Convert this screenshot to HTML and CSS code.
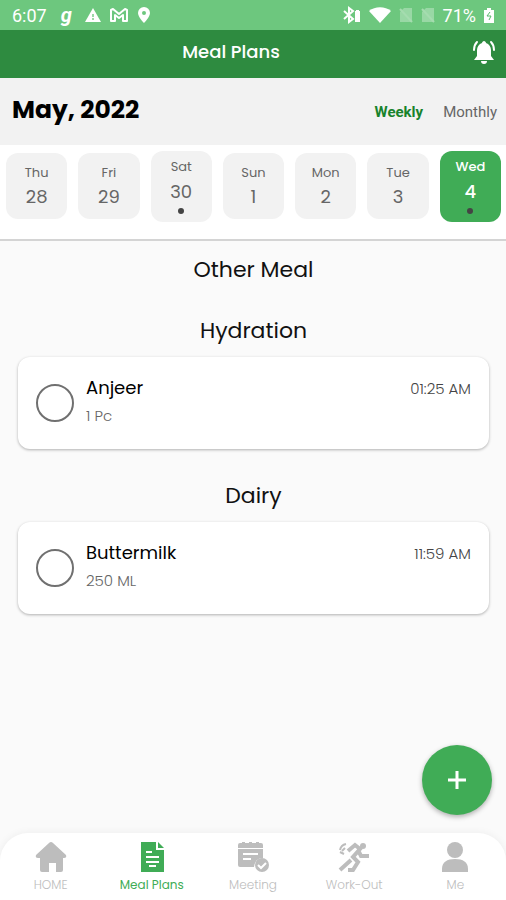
FILE: index.html
```html
<!DOCTYPE html>
<html lang="en">
<head>
    <meta charset="UTF-8">
    <meta name="viewport" content="width=device-width, initial-scale=1.0">
    <title>Meal Plans</title>
    <link rel="stylesheet" href="styles.css">
</head>
<body>
    <div class="status-bar">
        <div class="status-left">
            <span class="clock">6:07</span>
            <span class="g-logo">g</span>
            <svg width="18" height="18" viewBox="0 0 18 18"><path d="M9 2L17 16H1z" fill="#fff"/><path d="M9 8v3M9 12v2" stroke="#9bd8a6" stroke-width="2"/></svg>
            <svg width="18" height="18" viewBox="0 0 18 18"><path d="M1 15V4l2-1 6 5 6-5 2 1v11h-4V9l-4 3-4-3v6z" fill="none" stroke="#fff" stroke-width="2" stroke-linejoin="round"/></svg>
            <svg width="16" height="18" viewBox="0 0 16 18"><path d="M8 1a6 6 0 0 0-6 6c0 4 6 10 6 10s6-6 6-10a6 6 0 0 0-6-6zm0 4a2 2 0 1 1 0 4 2 2 0 0 1 0-4z" fill="#fff"/></svg>
        </div>
        <div class="status-right">
            <svg width="18" height="18" viewBox="0 0 18 18"><path d="M1 5l9 8-4 3V2l4 3-9 8" fill="none" stroke="#fff" stroke-width="2"/><path d="M12 5h1V4h3v1h1v11h-5z" fill="#fff"/></svg>
            <svg class="wifi" width="22" height="18" viewBox="0 0 22 18"><path d="M0 5C6 0 16 0 22 5L11 17z" fill="#fff"/></svg>
            <svg width="14" height="18" viewBox="0 0 14 18"><path d="M5 2h8v14H1V6z" fill="#fff" opacity=".3"/><path d="M1 3l12 13" stroke="#a5dcaf" stroke-width="2"/></svg>
            <svg width="14" height="18" viewBox="0 0 14 18"><path d="M5 2h8v14H1V6z" fill="#fff" opacity=".3"/><path d="M1 3l12 13" stroke="#a5dcaf" stroke-width="2"/></svg>
            <span>71%</span>
            <svg width="10" height="18" viewBox="0 0 10 18"><path d="M0 4h3V2h4v2h3v13H0z" fill="#fff"/><path d="M6 6l-3 4h4l-2 4" fill="none" stroke="#59b76b"/></svg>
        </div>
    </div>

    <header class="app-bar">
        <h1>Meal Plans</h1>
        <button class="bell" aria-label="Notifications">
            <svg width="24" height="26" viewBox="0 0 24 26"><path d="M12 2c1 0 2 1 2 2 3 1 5 4 5 7v6l3 4H2l3-4v-6c0-3 2-6 5-7 0-1 1-2 2-2zM9 22h6c0 2-1 3-3 3s-3-1-3-3z" fill="#fff"/><path d="M5 3C3 5 2 7 2 11M19 3c2 2 3 4 3 8" fill="none" stroke="#fff" stroke-width="2" stroke-linecap="round"/></svg>
        </button>
    </header>

    <div class="month-bar">
        <h2>May, 2022</h2>
        <div class="view-switch">
            <button class="view active">Weekly</button>
            <button class="view">Monthly</button>
        </div>
    </div>

    <div class="days">
        <button class="day"><span>Thu</span><span class="date">28</span></button>
        <button class="day"><span>Fri</span><span class="date">29</span></button>
        <button class="day marked"><span>Sat</span><span class="date">30</span></button>
        <button class="day"><span>Sun</span><span class="date">1</span></button>
        <button class="day"><span>Mon</span><span class="date">2</span></button>
        <button class="day"><span>Tue</span><span class="date">3</span></button>
        <button class="day marked selected"><span>Wed</span><span class="date">4</span></button>
    </div>

    <main>
        <h3>Other Meal</h3>
        <h3>Hydration</h3>
        <div class="meal">
            <input type="checkbox" id="anjeer">
            <label for="anjeer">Anjeer<small>1 Pc</small></label>
            <time>01:25 AM</time>
        </div>
        <h3>Dairy</h3>
        <div class="meal">
            <input type="checkbox" id="buttermilk">
            <label for="buttermilk">Buttermilk<small>250 ML</small></label>
            <time>11:59 AM</time>
        </div>
    </main>

    <div class="bottom">
        <button class="add" aria-label="Add meal">
            <svg width="18" height="18" viewBox="0 0 18 18"><path d="M9 0v18M0 9h18" stroke="#fff" stroke-width="3"/></svg>
        </button>
        <nav>
            <a href="#">
                <svg width="32" height="32" viewBox="0 0 32 32"><path d="M14 2q2-2 4 0l13 12q1 3-2 3h-1v12q0 2-2 2h-5v-9h-7v9H7q-2 0-2-2V17H3q-3 0-2-3z"/></svg>
                HOME
            </a>
            <a href="#" class="current">
                <svg width="32" height="32" viewBox="0 0 32 32"><path d="M5 1h15v8h8v22H5z"/><path d="M22 1l6 6h-6z"/><path d="M10 11h6M10 16h13M10 21h13M13 25h7" stroke="#fff" stroke-width="2"/></svg>
                Meal Plans
            </a>
            <a href="#">
                <svg width="32" height="32" viewBox="0 0 32 32"><path d="M3 2h2V1h3v1h4V1h3v1h4V1h3v1h2q2 0 2 2v3H1V4q0-2 2-2zM1 8h25v9q-8 0-9 9H3q-2 0-2-2z"/><path d="M6 13h15M6 18h8" stroke="#fff" stroke-width="2"/><circle cx="25" cy="24" r="7"/><path d="M21 24l3 3 5-5" fill="none" stroke="#fff" stroke-width="2"/></svg>
                Meeting
            </a>
            <a href="#">
                <svg class="runner" width="32" height="32" viewBox="0 0 32 32"><circle cx="25" cy="5" r="3" class="fill"/><path d="M10 10l7-6 5 4-7 8 5 5-5 8h-5M20 9l3 6h8M13 19L2 29"/><path d="M8 3Q3 4 2 9M7 7L4 10M6 13l-4-2" class="thin"/></svg>
                Work-Out
            </a>
            <a href="#">
                <svg width="32" height="32" viewBox="0 0 32 32"><circle cx="16" cy="9" r="8"/><path d="M3 31v-3c0-7 5-10 13-10s13 3 13 10v3z"/></svg>
                Me
            </a>
        </nav>
    </div>
</body>
</html>
```
FILE: styles.css
```css
* {
    box-sizing: border-box;
}
body {
    margin: 0;
    min-height: 100vh;
    display: flex;
    flex-direction: column;
    background-color: #fafafa;
    color: #111;
    font-family: Poppins, Inter, sans-serif;
}
button {
    border: none;
    padding: 0;
    background: none;
    font-family: inherit;
    cursor: pointer;
}
h1, h2, h3 {
    margin: 0;
}
svg {
    display: block;
}
.status-bar {
    height: 30px;
    padding: 0 12px;
    display: flex;
    justify-content: space-between;
    align-items: center;
    background-color: #6dc77e;
    color: #fff;
    font-family: Roboto, sans-serif;
    font-size: 18px;
}
.status-left,
.status-right {
    display: flex;
    align-items: center;
    gap: 8px;
}
.g-logo {
    margin: 0 4px 0 6px;
    font-size: 20px;
    font-style: italic;
    font-weight: bold;
    line-height: 20px;
}
.app-bar {
    height: 48px;
    padding: 0 10px 4px 0;
    display: flex;
    align-items: center;
    gap: 10px;
    background-color: #2e8b40;
    color: #fff;
}
.app-bar h1 {
    flex: 1;
    font-size: 18px;
    font-weight: 500;
    line-height: 24px;
    text-align: center;
}
.month-bar {
    height: 67px;
    padding: 0 9px 4px 12px;
    display: flex;
    justify-content: space-between;
    align-items: center;
    background-color: #f2f2f2;
}
.month-bar h2 {
    color: #000;
    font-size: 25px;
    font-weight: 700;
}
.view-switch {
    display: flex;
    gap: 20px;
}
.view {
    padding-top: 4px;
    color: #666;
    font-family: Roboto, sans-serif;
    font-size: 15px;
}
.view.active {
    color: #18832c;
    font-weight: 700;
}
.days {
    height: 96px;
    padding: 0 5px 12px 6px;
    display: grid;
    grid-template-columns: repeat(7, 1fr);
    gap: 11px;
    align-items: center;
    background-color: #fff;
    border-bottom: 2px solid #d4d4d4;
}
.day {
    height: 66px;
    display: flex;
    flex-direction: column;
    align-items: center;
    justify-content: center;
    gap: 3px;
    border-radius: 12px;
    background-color: #f2f2f2;
    color: #666;
    font-size: 13px;
    line-height: 18px;
}
.date {
    font-size: 18px;
    line-height: 24px;
}
.marked {
    height: 71px;
    gap: 4px;
}
.marked::after {
    content: "";
    width: 6px;
    height: 6px;
    border-radius: 50%;
    background-color: #444;
}
.selected {
    background-color: #40ac56;
    color: #fff;
    font-weight: 500;
}
main {
    flex: 1;
    padding: 0 17px 0 18px;
}
h3 {
    margin-top: 13px;
    font-size: 22px;
    font-weight: 400;
    line-height: 32px;
    text-align: center;
}
h3 + h3 {
    margin-top: 29px;
}
.meal {
    min-height: 92px;
    margin-top: 10px;
    padding: 18px;
    display: flex;
    align-items: flex-start;
    gap: 12px;
    border-radius: 12px;
    background-color: #fff;
    box-shadow: 0 1px 3px rgba(0, 0, 0, 0.3);
}
.meal + h3 {
    margin-top: 31px;
}
.meal input {
    appearance: none;
    width: 38px;
    height: 38px;
    margin: 9px 0 0;
    border: 2px solid #707070;
    border-radius: 50%;
}
.meal input:checked {
    background-color: #40ac56;
}
.meal label {
    flex: 1;
    color: #000;
    font-size: 18px;
    line-height: 26px;
}
.meal small {
    display: block;
    margin-top: 2px;
    color: #666;
    font-size: 15px;
    font-weight: 300;
}
.meal time {
    color: #444;
    font-size: 15px;
    font-weight: 300;
    line-height: 28px;
}
.bottom {
    position: sticky;
    bottom: 0;
}
.add {
    position: absolute;
    right: 14px;
    bottom: 85px;
    width: 70px;
    height: 70px;
    display: flex;
    align-items: center;
    justify-content: center;
    border-radius: 50%;
    background-color: #40ac56;
    box-shadow: 0 2px 5px rgba(0, 0, 0, 0.3);
}
nav {
    height: 67px;
    padding-top: 8px;
    display: grid;
    grid-template-columns: repeat(5, 1fr);
    border-radius: 28px 28px 0 0;
    background-color: #fff;
    box-shadow: 0 0 8px rgba(0, 0, 0, 0.06);
}
nav a {
    display: flex;
    flex-direction: column;
    align-items: center;
    gap: 4px;
    color: #bdbdbd;
    font-size: 12px;
    font-weight: 300;
    line-height: 16px;
    text-decoration: none;
}
nav svg {
    fill: currentColor;
}
nav .current {
    color: #40ac56;
    font-weight: 400;
}
.runner {
    fill: none;
    stroke: currentColor;
    stroke-width: 4;
}
.runner .fill {
    fill: currentColor;
    stroke: none;
}
.runner .thin {
    stroke-width: 2;
}
```
